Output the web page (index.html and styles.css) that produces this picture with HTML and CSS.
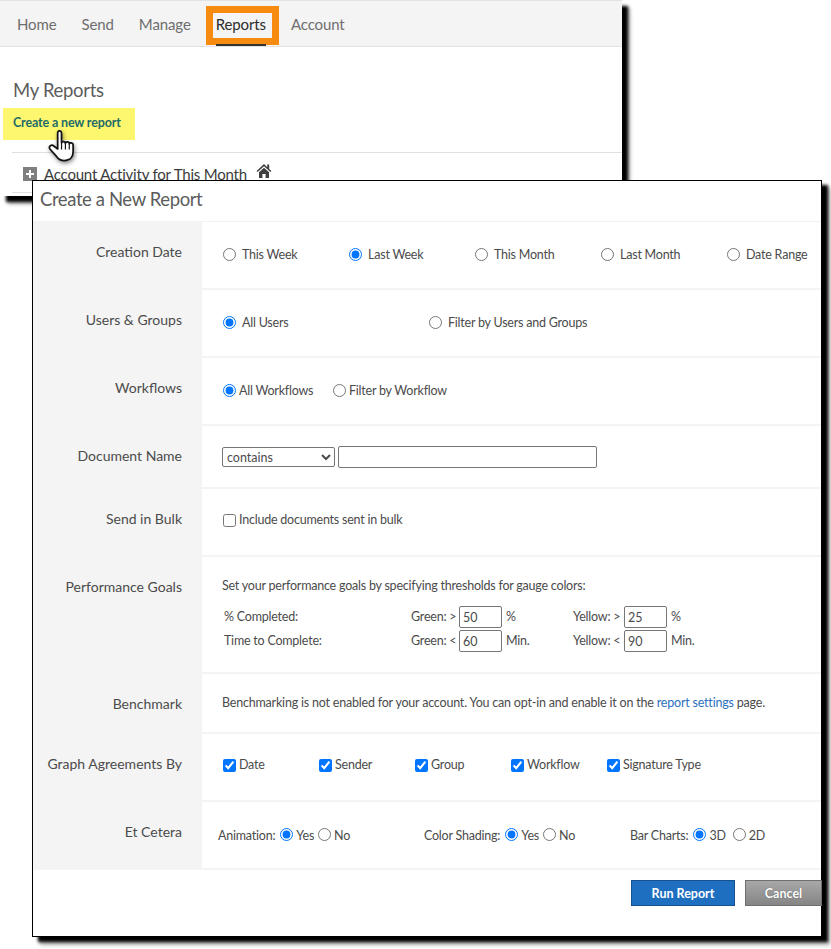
FILE: index.html
```html
<!DOCTYPE html>
<html lang="en">
<head>
<meta charset="utf-8">
<title>Create a New Report</title>
<link rel="stylesheet" href="styles.css">
</head>
<body>
<section class="back-window">
  <nav class="nav">
    <a class="nav-item">Home</a>
    <a class="nav-item">Send</a>
    <a class="nav-item">Manage</a>
    <a class="nav-item nav-active">Reports</a>
    <a class="nav-item">Account</a>
  </nav>
  <div class="back-body">
    <h1 class="page-title">My Reports</h1>
    <div class="highlight"><a class="create-link">Create a new report</a></div>
    <div class="report-row">
      <span class="plus"></span>
      <span class="report-name">Account Activity for This Month</span>
      <svg class="home-icon" viewBox="0 0 16 16"><path d="M8 1 .6 8l1 1.1L8 3.2l6.4 5.9 1-1.1-2.2-2V1.6h-2v2.6z" fill="#3f3f3f"/><path d="M3 9.3 8 4.7l5 4.6V15H9.6v-4H6.4v4H3z" fill="#3f3f3f"/></svg>
    </div>
  </div>
</section>

<svg class="hand" viewBox="0 0 30 36">
  <path d="M10 3c0-3 4-3 4 0v10c0-1 4-2 4 .5 0-1.500 4-2 4 .5 .5-1.500 4-1 4 1.500v7c0 5-3 9-9 9-4 0-6-1-8-4l-7-8c-2-3 2-5 4-3l4 3z" fill="#fff" stroke="#111" stroke-width="1.800" stroke-linejoin="round"/>
  <path d="M14 13v7M18 13.500v6.500M22 14.500v5.500" stroke="#111" stroke-width="1.200" fill="none"/>
</svg>

<section class="modal">
  <h2 class="modal-title">Create a New Report</h2>
  <div class="rows">
    <div class="row row-68">
      <div class="label">Creation Date</div>
      <div class="cell cols-126">
        <label class="opt"><input type="radio" name="d"><span class="gap6">This Week</span></label>
        <label class="opt"><input type="radio" name="d" checked><span class="gap6">Last Week</span></label>
        <label class="opt"><input type="radio" name="d"><span class="gap6">This Month</span></label>
        <label class="opt"><input type="radio" name="d"><span class="gap6">Last Month</span></label>
        <label class="opt"><input type="radio" name="d"><span class="gap6">Date Range</span></label>
      </div>
    </div>
    <div class="row row-68">
      <div class="label">Users &amp; Groups</div>
      <div class="cell cols-206">
        <label class="opt"><input type="radio" name="u" checked><span class="gap6">All Users</span></label>
        <label class="opt"><input type="radio" name="u"><span class="gap6">Filter by Users and Groups</span></label>
      </div>
    </div>
    <div class="row row-68">
      <div class="label">Workflows</div>
      <div class="cell cols-110">
        <label class="opt"><input type="radio" name="w" checked><span class="gap3">All Workflows</span></label>
        <label class="opt"><input type="radio" name="w"><span class="gap3">Filter by Workflow</span></label>
      </div>
    </div>
    <div class="row row-63">
      <div class="label">Document Name</div>
      <div class="cell doc-cell">
        <select class="doc-select"><option>contains</option></select>
        <input class="doc-input" type="text">
      </div>
    </div>
    <div class="row row-68">
      <div class="label">Send in Bulk</div>
      <div class="cell bulk-cell">
        <label class="opt"><input type="checkbox"><span class="gap3">Include documents sent in bulk</span></label>
      </div>
    </div>
    <div class="row row-117">
      <div class="label">Performance Goals</div>
      <div class="cell perf-cell">
        <p class="perf-intro">Set your performance goals by specifying thresholds for gauge colors:</p>
        <div class="perf-grid">
          <span>% Completed:</span>
          <span class="right">Green: &gt;</span><input class="num" type="text" value="50"><span>%</span>
          <span class="right">Yellow: &gt;</span><input class="num" type="text" value="25"><span>%</span>
          <span>Time to Complete:</span>
          <span class="right">Green: &lt;</span><input class="num" type="text" value="60"><span>Min.</span>
          <span class="right">Yellow: &lt;</span><input class="num" type="text" value="90"><span>Min.</span>
        </div>
      </div>
    </div>
    <div class="row row-60">
      <div class="label">Benchmark</div>
      <div class="cell bench-cell">Benchmarking is not enabled for your account. You can opt-in and enable it on the&nbsp;<a class="link">report settings</a>&nbsp;page.</div>
    </div>
    <div class="row row-68">
      <div class="label">Graph Agreements By</div>
      <div class="cell cols-96">
        <label class="opt"><input type="checkbox" checked><span class="gap3">Date</span></label>
        <label class="opt"><input type="checkbox" checked><span class="gap3">Sender</span></label>
        <label class="opt"><input type="checkbox" checked><span class="gap3">Group</span></label>
        <label class="opt"><input type="checkbox" checked><span class="gap3">Workflow</span></label>
        <label class="opt"><input type="checkbox" checked><span class="gap3">Signature Type</span></label>
      </div>
    </div>
    <div class="row row-68">
      <div class="label">Et Cetera</div>
      <div class="cell etc-cell">
        <div class="etc-group">Animation:<input type="radio" name="a" checked>Yes<input type="radio" name="a">No</div>
        <div class="etc-group">Color Shading:<input type="radio" name="c" checked>Yes<input type="radio" name="c">No</div>
        <div class="etc-group">Bar Charts:<input type="radio" name="b" checked>3D<input class="wide" type="radio" name="b">2D</div>
      </div>
    </div>
  </div>
  <footer class="modal-foot">
    <button class="btn btn-run">Run Report</button>
    <button class="btn btn-cancel">Cancel</button>
  </footer>
</section>
</body>
</html>
```
FILE: styles.css
```css
* { box-sizing: border-box; }
html, body { margin: 0; padding: 0; }
body {
  width: 831px;
  height: 949px;
  position: relative;
  overflow: hidden;
  background: #fff;
  font-family: Lato, "Liberation Sans", sans-serif;
  font-size: 12.5px;
  letter-spacing: -0.22px;
  color: #4b4b4b;
}

/* back window */
.back-window {
  position: absolute;
  left: 0;
  top: 0;
  width: 622px;
  height: 196px;
  background: #fff;
  box-shadow: 6px 6px 3px #000, 8px 8px 4px rgba(0,0,0,.3);
}
.nav {
  height: 47px;
  display: flex;
  gap: 25px;
  padding: 0 0 0 17px;
  background: #f4f4f4;
  border-top: 1px solid #e3e3e3;
  border-bottom: 1px solid #e3e3e3;
  font-size: 15px;
  letter-spacing: -0.12px;
  color: #6e6e6e;
}
.nav-item { line-height: 47px; }
.nav-active {
  position: relative;
  color: #2c2c2c;
}
.nav-active::before {
  content: "";
  position: absolute;
  left: -10px;
  right: -13px;
  top: 5px;
  bottom: 1px;
  border: 7px solid #f68b0f;
  background: transparent;
}
.nav-active::after {
  content: "";
  position: absolute;
  left: 0;
  right: 0;
  bottom: 0;
  height: 2px;
  background: #333;
}
.back-body { padding: 31px 0 0 12px; }
.page-title {
  margin: 0 0 5px 1px;
  font-size: 18.5px;
  font-weight: 400;
  letter-spacing: -0.3px;
  line-height: 25px;
  color: #5c5c5c;
}
.highlight {
  margin-left: -9px;
  width: 132px;
  height: 32px;
  background: #fdf66f;
  padding-left: 10px;
  line-height: 30px;
  font-size: 12.500px;
  font-weight: 700;
  letter-spacing: -0.15px;
  color: #1f6b68;
}
.report-row {
  margin-top: 12px;
  height: 41px;
  border-top: 1px solid #e0e0e0;
  border-bottom: 1px solid #e0e0e0;
  display: flex;
  align-items: flex-start;
  padding: 10px 0 0 11px;
}
.plus {
  width: 14px;
  height: 14px;
  margin-top: 4px;
  background:
    linear-gradient(#fff, #fff) center / 8px 2px no-repeat,
    linear-gradient(#fff, #fff) center / 2px 8px no-repeat,
    #7f7f7f;
}
.report-name {
  margin-left: 7px;
  font-size: 15px;
  letter-spacing: -0.2px;
  line-height: 22px;
  color: #3c3c3c;
}
.home-icon { width: 16px; height: 16px; margin-left: 9px; }
.hand {
  position: absolute;
  left: 48px;
  top: 130px;
  width: 29px;
  height: 35px;
  filter: drop-shadow(1px 2px 2px rgba(0,0,0,.45));
  z-index: 2;
}

/* modal */
.modal {
  position: absolute;
  left: 32px;
  top: 180px;
  width: 790px;
  height: 757px;
  background: #fff;
  border: 1px solid #000;
  box-shadow: 6px 5px 3px #000, 8px 8px 4px rgba(0,0,0,.3);
  z-index: 3;
}
.modal-title {
  margin: 0;
  height: 40px;
  padding-left: 7px;
  font-size: 18.5px;
  font-weight: 400;
  letter-spacing: -0.4px;
  line-height: 37px;
  color: #5c5c5c;
}
.rows { display: flex; flex-direction: column; border-top: 1px solid #f2f2f2; }
.row { display: grid; grid-template-columns: 169px minmax(0, 1fr); }
.row-68 { height: 68px; }
.row-63 { height: 63px; }
.row-117 { height: 117px; }
.row-60 { height: 60px; }
.label {
  background: #f4f4f4;
  text-align: right;
  padding: 20px 20px 0 0;
  font-size: 14px;
  letter-spacing: 0;
  line-height: 20px;
  color: #4b4b4b;
}
.cell {
  border-bottom: 2px solid #f4f4f4;
  padding-left: 20px;
  line-height: 18px;
  color: #4b4b4b;
}
input[type="radio"], input[type="checkbox"] {
  width: 13px;
  height: 13px;
  margin: 0 0 0 1px;
  flex: none;
  accent-color: #0075ff;
}
.opt { display: flex; align-items: center; white-space: nowrap; }
.opt input[type="radio"] { margin-top: -1px; }
.gap6 { margin-left: 6px; }
.gap3 { margin-left: 3px; }
.cols-126, .cols-206, .cols-110, .cols-96 { display: grid; align-content: start; padding-top: 24px; }
.cols-126 { grid-template-columns: repeat(4, 126px) minmax(0, 1fr); }
.cols-206 { grid-template-columns: repeat(2, 206px); }
.cols-110 { grid-template-columns: repeat(2, 110px); }
.cols-96 { grid-template-columns: repeat(5, 96px); padding-top: 22px; }
.doc-cell { display: flex; align-items: flex-start; padding-top: 20px; }
.doc-select {
  width: 113px;
  height: 20px;
  margin-top: 1px;
  font: 12.5px Lato, sans-serif;
  color: #4b4b4b;
  background: #fff;
  border: 1px solid #767676;
  border-radius: 2px;
}
.doc-input {
  width: 259px;
  height: 22px;
  margin-left: 3px;
  border: 1px solid #767676;
  border-radius: 2px;
  background: #fff;
}
.bulk-cell { padding-top: 22px; }
.perf-cell { padding-top: 20px; }
.perf-intro { margin: 0 0 10px; line-height: 18px; }
.perf-grid {
  display: grid;
  grid-template-columns: 187px 48px 43px 71px 51px 43px auto;
  grid-auto-rows: 24px;
  padding-left: 2px;
  align-items: center;
}
.right { white-space: nowrap; text-align: left; }
.num {
  width: 43px;
  height: 22px;
  padding: 0 3px;
  border: 1px solid #767676;
  border-radius: 2px;
  font: 12.5px Lato, sans-serif;
  color: #4b4b4b;
  background: #fff;
}
.perf-grid span:nth-child(4), .perf-grid span:nth-child(7),
.perf-grid span:nth-child(11), .perf-grid span:nth-child(14) { padding-left: 4px; }
.bench-cell { padding-top: 20px; white-space: nowrap; letter-spacing: -0.2px; }
.link { color: #2d6fbd; }
.etc-cell { display: flex; padding: 25px 0 0 16px; }
.etc-group { flex: none; width: 206px; display: flex; align-items: center; height: 18px; white-space: nowrap; }
.etc-group input { margin: -3px 3px 0 5px; }
.etc-group input + input { margin-left: 4px; }
.etc-group .wide { margin-left: 7px; }
.modal-foot {
  display: flex;
  justify-content: flex-end;
  gap: 10px;
  padding-top: 10px;
  margin-right: -1px;
}
.btn {
  height: 26px;
  font: 700 12.5px Lato, sans-serif;
  color: #fff;
  border-radius: 0;
  padding: 0;
}
.btn-run { width: 104px; background: #1f6fc0; border: 1px solid #15508f; }
.btn-cancel {
  width: 77px;
  background: linear-gradient(#a8a8a8, #858585);
  border: 1px solid #6f6f6f;
  text-shadow: 0 0 1px #555;
}
```
